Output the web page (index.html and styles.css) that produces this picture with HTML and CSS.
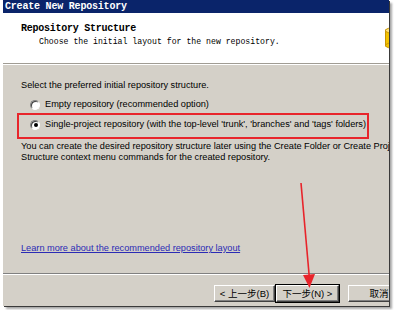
FILE: index.html
```html
<!DOCTYPE html>
<html lang="en">

<head>
  <meta charset="UTF-8">
  <meta name="viewport" content="width=device-width, initial-scale=1.0">
  <title>Create New Repository</title>
  <link rel="stylesheet" href="styles.css">
</head>

<body>
  <div class="frame">
    <div class="titlebar">Create New Repository</div>

    <div class="header">
      <div class="header-text">
        <h2>Repository Structure</h2>
        <p>Choose the initial layout for the new repository.</p>
      </div>
      <svg class="db-icon" width="20" height="22" viewBox="0 0 20 22">
        <rect x="0.5" y="3" width="19" height="16" fill="#f2c200" stroke="#c89400"/>
        <ellipse cx="10" cy="3.5" rx="9.5" ry="3" fill="#ffe27a" stroke="#c89400"/>
        <ellipse cx="10" cy="18.5" rx="9.5" ry="3" fill="#f2c200" stroke="#c89400"/>
      </svg>
    </div>

    <div class="content">
      <p class="line">Select the preferred initial repository structure.</p>

      <div class="options">
        <label class="option"><span class="radio"></span>Empty repository (recommended option)</label>
        <div class="mark-box">
          <label class="option"><span class="radio checked"></span>Single-project repository (with the top-level 'trunk', 'branches' and 'tags' folders)</label>
        </div>
      </div>

      <p class="line note">You can create the desired repository structure later using the Create Folder or Create Project<br>Structure context menu commands for the created repository.</p>

      <a class="learn" href="#">Learn more about the recommended repository layout</a>
    </div>

    <div class="footer">
      <button class="btn">&lt; 上一步(B)</button>
      <button class="btn default">下一步(N) &gt;</button>
      <button class="btn cancel">取消</button>
    </div>
  </div>

  <!-- annotation arrow drawn over the dialog -->
  <svg class="arrow" width="394" height="310" viewBox="0 0 394 310">
    <line x1="301" y1="183" x2="309.3" y2="277" stroke="#e8242b" stroke-width="1.6"/>
    <polygon points="303,275 315,274 309.5,288" fill="#e8242b"/>
  </svg>
</body>

</html>
```

FILE: styles.css
```css
* {
  margin: 0;
  padding: 0;
  box-sizing: border-box;
}

body {
  width: 394px;
  height: 310px;
  background: #fff;
  position: relative;
  overflow: hidden;
  font-family: 'Liberation Sans', Arial, sans-serif;
}

.frame {
  margin-left: 3px;
  width: 386px;
  height: 306px;
  background: #d4d0c8;
  overflow: hidden;
  display: flex;
  flex-direction: column;
  box-shadow: 1px 1px 0 #3a3a3a, 3px 3px 2px rgba(0, 0, 0, 0.35);
}

.titlebar {
  height: 13px;
  background: #0a246a;
  color: #fff;
  font-family: 'Liberation Mono', 'Courier New', monospace;
  font-weight: bold;
  font-size: 10px;
  letter-spacing: -0.2px;
  line-height: 13px;
  padding-left: 2px;
}

.header {
  height: 51px;
  background: #fff;
  display: flex;
  border-bottom: 1px solid #a09c94;
  box-shadow: 0 1px 0 #fff;
  overflow: hidden;
}

.header-text {
  padding: 10px 0 0 18px;
  font-family: 'Liberation Mono', 'Courier New', monospace;
  color: #000;
}

.header h2 {
  font-size: 10px;
  line-height: 12px;
  letter-spacing: -0.25px;
  font-weight: bold;
}

.header p {
  margin-top: 2px;
  padding-left: 18px;
  font-size: 8.2px;
  line-height: 10px;
}

.db-icon {
  margin: 14px -16px 0 auto;
  flex-shrink: 0;
}

.content {
  flex: 1;
  display: flex;
  flex-direction: column;
  padding: 16px 0 0 18px;
  font-size: 9.2px;
  line-height: 11px;
  color: #000;
  border-bottom: 1px solid #808080;
  white-space: nowrap;
}

.options {
  margin-top: 8px;
}

.option {
  display: flex;
  align-items: center;
  gap: 5px;
  padding-left: 9px;
  height: 11px;
}

.mark-box {
  margin: 3px 0 0 -4px;
  width: 352px;
  height: 26px;
  border: 2px solid #e8252b;
  padding: 4px 0 0 2px;
}

.radio {
  width: 10px;
  height: 10px;
  border-radius: 50%;
  background: #fff;
  border: 1px solid;
  border-color: #808080 #fff #fff #808080;
  box-shadow: inset 1px 1px 0 #404040;
  position: relative;
  flex-shrink: 0;
}

.radio.checked::after {
  content: "";
  position: absolute;
  left: 2.5px;
  top: 2.5px;
  width: 4px;
  height: 4px;
  border-radius: 50%;
  background: #000;
}

.note {
  margin-top: 2px;
}

.learn {
  margin-top: auto;
  margin-bottom: 19px;
  color: #2b2bb5;
  text-decoration: underline;
  align-self: flex-start;
}

.footer {
  height: 32px;
  border-top: 1px solid #fff;
  display: flex;
  align-items: flex-start;
  padding: 10px 0 0 211px;
}

.btn {
  flex-shrink: 0;
  width: 61px;
  height: 17px;
  background: #d4d0c8;
  border: 1px solid;
  border-color: #fff #404040 #404040 #fff;
  box-shadow: inset -1px -1px 0 #808080;
  font-family: 'Liberation Sans', 'Noto Sans CJK SC', sans-serif;
  font-size: 9.5px;
  color: #000;
  line-height: 14px;
}

.btn.default {
  width: 63px;
  margin-left: 1px;
  outline: 1px solid #000;
  outline-offset: 0;
  border-color: #fff #404040 #404040 #fff;
}

.btn.cancel {
  margin-left: 9px;
  width: 62px;
}

.arrow {
  position: absolute;
  left: 0;
  top: 0;
  pointer-events: none;
}
```
